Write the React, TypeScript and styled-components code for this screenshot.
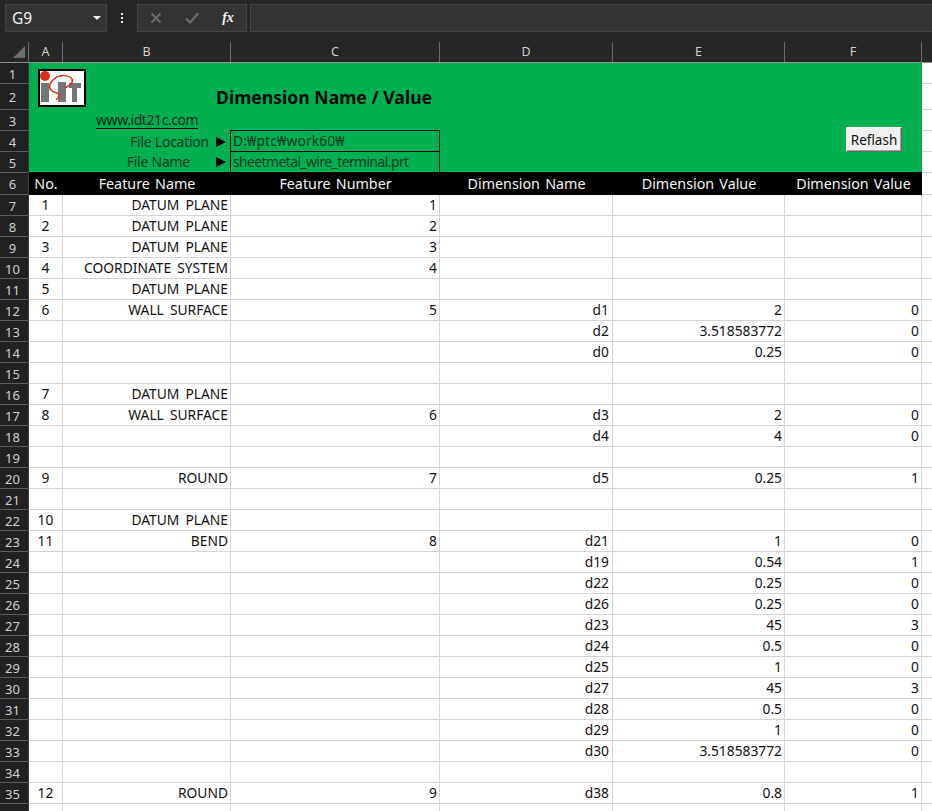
import React from "react";
import styled, { createGlobalStyle } from "styled-components";

const FONT = `"Noto Sans", "Open Sans", "Liberation Sans", sans-serif`;

const Global = createGlobalStyle`
  html, body { margin: 0; padding: 0; background: #262626; overflow: hidden; }
  * { box-sizing: border-box; }
`;

const COLS = "34px 168px 209px 173px 172px 137px";

const Page = styled.div`
  width: 932px;
  height: 811px;
  overflow: hidden;
  background: #262626;
  font-family: ${FONT};
`;

const FormulaBar = styled.div`
  display: flex;
  align-items: flex-start;
  height: 42px;
  padding: 4px 0 0 5px;
`;

const NameBox = styled.div`
  display: flex;
  align-items: center;
  justify-content: space-between;
  width: 102px;
  height: 28px;
  padding: 0 5px 0 6px;
  background: #333333;
  border: 1px solid #434343;
  color: #f2f2f2;
  font-size: 15.5px;
`;

const Caret = styled.span`
  width: 0;
  height: 0;
  border-left: 4px solid transparent;
  border-right: 4px solid transparent;
  border-top: 4px solid #f2f2f2;
`;

const Dots = styled.div`
  display: flex;
  flex-direction: column;
  gap: 2px;
  width: 30px;
  height: 28px;
  align-items: center;
  justify-content: center;
`;

const Dot = styled.span`
  width: 2px;
  height: 2px;
  background: #e6e6e6;
`;

const ActionBox = styled.div`
  display: flex;
  align-items: center;
  width: 110px;
  height: 28px;
  background: #333333;
  border: 1px solid #434343;
`;

const ActionSlot = styled.span`
  display: flex;
  align-items: center;
  justify-content: center;
  width: 36px;
  height: 26px;
`;

const FxText = styled.span`
  font-family: "Liberation Serif", serif;
  font-style: italic;
  font-weight: 700;
  font-size: 14px;
  color: #f2f2f2;
`;

const FormulaInput = styled.div`
  flex: 1;
  height: 28px;
  margin-left: 3px;
  background: #333333;
  border: 1px solid #434343;
  border-right: 0;
`;

const ColumnHeader = styled.div`
  display: grid;
  grid-template-columns: 29px ${COLS} 1fr;
  height: 21px;
  border-bottom: 1px solid #8e8e8e;
`;

const Corner = styled.div`
  display: flex;
  align-items: flex-end;
  justify-content: flex-end;
  padding: 0 3px 4px 0;
  border-right: 1px solid #6a6a6a;
`;

const ColumnLabel = styled.div`
  display: flex;
  align-items: center;
  justify-content: center;
  border-right: 1px solid #6a6a6a;
  color: #d0d0d0;
  font-size: 12.5px;
  padding-bottom: 1px;
`;

const Sheet = styled.div`
  display: flex;
`;

const RowHeaders = styled.div`
  display: flex;
  flex-direction: column;
  width: 29px;
  flex: none;
`;

const RowHead = styled.div<{ $h: number }>`
  display: flex;
  align-items: center;
  justify-content: center;
  flex: none;
  height: ${(p) => p.$h}px;
  background: #212121;
  border-bottom: 1px solid #5c5c5c;
  border-right: 1px solid #3a3a3a;
  color: #cfcfcf;
  font-size: 13px;
  line-height: 18px;
  padding: 1px 3px 0 0;
`;

const Cells = styled.div`
  flex: 1;
  background: #ffffff;
  min-width: 0;
`;

const TopBlock = styled.div`
  display: grid;
  grid-template-columns: 893px 1fr;
`;

const Banner = styled.div`
  display: grid;
  grid-template-columns: ${COLS};
  grid-template-rows: 21px 26px 21px 21px 20px;
  height: 109px;
  background: #00af50;
  color: #0a0a0a;
`;

const LogoFrame = styled.div`
  grid-column: 1 / 3;
  grid-row: 1 / 3;
  margin: 6px 0 0 9px;
  width: 48px;
  height: 38px;
`;

const Title = styled.div`
  grid-column: 2 / 5;
  grid-row: 2;
  padding-left: 153px;
  font-size: 17.6px;
  font-weight: 700;
  line-height: 26px;
  white-space: nowrap;
`;

const SiteLink = styled.div`
  grid-column: 2;
  grid-row: 3;
  padding-left: 33px;
  font-size: 14px;
  letter-spacing: -0.43px;
  line-height: 20px;
`;

const Underlined = styled.span`
  display: inline-block;
  line-height: 17px;
  border-bottom: 1px solid #0a0a0a;
  color: #0d2c1c;
`;

const FileLabel = styled.div<{ $row: number }>`
  grid-column: 2;
  grid-row: ${(p) => p.$row};
  display: flex;
  align-items: center;
  justify-content: flex-end;
  font-size: 14px;
  letter-spacing: -0.25px;
  line-height: 20px;
  color: #0d3a22;
  padding-right: 5px;
`;

const LabelText = styled.span<{ $gap: number }>`
  margin-right: ${(p) => p.$gap}px;
`;

const Arrow = styled.span`
  width: 0;
  height: 0;
  border-top: 5px solid transparent;
  border-bottom: 5px solid transparent;
  border-left: 10px solid #000000;
`;

const PathGroup = styled.div`
  grid-column: 3;
  grid-row: 4 / 6;
  display: flex;
  flex-direction: column;
  margin: -1px 0 0 -1px;
  height: 42px;
  border-left: 1px solid #000;
  border-right: 1px solid #000;
`;

const PathCell = styled.div<{ $tracking: number }>`
  height: 21px;
  border-top: 1px solid #000;
  padding-left: 2px;
  font-size: 13.8px;
  letter-spacing: ${(p) => p.$tracking}px;
  line-height: 20px;
  color: #0d3a22;
  white-space: nowrap;
`;

const RefreshButton = styled.button`
  grid-column: 6;
  grid-row: 3 / 6;
  align-self: start;
  margin: 17px 0 0 61px;
  width: 56px;
  height: 25px;
  padding: 0;
  background: #f0f0f0;
  border: 1px solid;
  border-color: #ffffff #696969 #696969 #ffffff;
  box-shadow: inset -1px -1px 0 #a0a0a0;
  color: #111;
  font-family: ${FONT};
  font-size: 13.5px;
`;

const TitleRow = styled.div`
  display: grid;
  grid-template-columns: ${COLS};
  height: 23px;
  background: #000;
`;

const TitleCell = styled.div`
  display: flex;
  align-items: center;
  justify-content: center;
  color: #f4f4f4;
  font-size: 14.3px;
  word-spacing: 1.5px;
  white-space: nowrap;
`;

const Trail = styled.div`
  display: flex;
  flex-direction: column;
`;

const TrailCell = styled.div<{ $h: number }>`
  height: ${(p) => p.$h}px;
  border-bottom: 1px solid #d4d4d4;
`;

const DataRow = styled.div`
  display: grid;
  grid-template-columns: ${COLS} 1fr;
  height: 21px;
  border-bottom: 1px solid #d4d4d4;
`;

const Cell = styled.div<{ $center?: boolean; $pad?: number }>`
  display: flex;
  align-items: center;
  justify-content: ${(p) => (p.$center ? "center" : "flex-end")};
  padding-right: ${(p) => (p.$center ? 0 : p.$pad ?? 2)}px;
  border-right: 1px solid #d4d4d4;
  color: #111;
  font-size: 13.8px;
  line-height: 18px;
  word-spacing: 2.5px;
  white-space: nowrap;
`;

const EndCell = styled.div``;

type Row = [string?, string?, string?, string?, string?, string?];

const rows: Row[] = [
  ["1", "DATUM PLANE", "1"],
  ["2", "DATUM PLANE", "2"],
  ["3", "DATUM PLANE", "3"],
  ["4", "COORDINATE SYSTEM", "4"],
  ["5", "DATUM PLANE"],
  ["6", "WALL SURFACE", "5", "d1", "2", "0"],
  ["", "", "", "d2", "3.518583772", "0"],
  ["", "", "", "d0", "0.25", "0"],
  [],
  ["7", "DATUM PLANE"],
  ["8", "WALL SURFACE", "6", "d3", "2", "0"],
  ["", "", "", "d4", "4", "0"],
  [],
  ["9", "ROUND", "7", "d5", "0.25", "1"],
  [],
  ["10", "DATUM PLANE"],
  ["11", "BEND", "8", "d21", "1", "0"],
  ["", "", "", "d19", "0.54", "1"],
  ["", "", "", "d22", "0.25", "0"],
  ["", "", "", "d26", "0.25", "0"],
  ["", "", "", "d23", "45", "3"],
  ["", "", "", "d24", "0.5", "0"],
  ["", "", "", "d25", "1", "0"],
  ["", "", "", "d27", "45", "3"],
  ["", "", "", "d28", "0.5", "0"],
  ["", "", "", "d29", "1", "0"],
  ["", "", "", "d30", "3.518583772", "0"],
  [],
  ["12", "ROUND", "9", "d38", "0.8", "1"],
  [],
];

const headHeights = [21, 26, 21, 21, 21, 22, ...rows.map(() => 21)];

const Logo = () => (
  <svg width="48" height="38" viewBox="0 0 48 38">
    <rect x="1" y="1" width="46" height="36" fill="#fff" stroke="#000" strokeWidth="2" />
    <rect x="3" y="14" width="8" height="19" fill="#757575" />
    <rect x="20" y="13" width="8" height="20" fill="#757575" />
    <rect x="31" y="14" width="12" height="5" fill="#757575" />
    <rect x="34" y="19" width="5" height="14" fill="#757575" />
    <path
      d="M27 19C32 16 36 13 34 10C31 6 22 5 16 10C11 14 10 19 14 22C17 24 22 24 21 27C20 29 19 30 18 31"
      fill="none"
      stroke="#d9301e"
      strokeWidth="1.5"
    />
    <circle cx="7" cy="7" r="5" fill="#d9301e" />
  </svg>
);

const CornerMark = () => (
  <svg width="12" height="12" viewBox="0 0 12 12">
    <path d="M12 0V12H0Z" fill="#6e6e6e" />
  </svg>
);

const CloseMark = () => (
  <svg width="12" height="12" viewBox="0 0 12 12">
    <path d="M1.5 1.5L10.5 10.5M10.5 1.5L1.5 10.5" stroke="#6b6b6b" strokeWidth="2" fill="none" />
  </svg>
);

const CheckMark = () => (
  <svg width="14" height="12" viewBox="0 0 14 12">
    <path d="M1 6.5L5 10.5L13 1.5" stroke="#6b6b6b" strokeWidth="2.4" fill="none" />
  </svg>
);

export default function App() {
  return (
    <Page>
      <Global />
      <FormulaBar>
        <NameBox>
          G9
          <Caret />
        </NameBox>
        <Dots>
          <Dot />
          <Dot />
          <Dot />
        </Dots>
        <ActionBox>
          <ActionSlot><CloseMark /></ActionSlot>
          <ActionSlot><CheckMark /></ActionSlot>
          <ActionSlot><FxText>fx</FxText></ActionSlot>
        </ActionBox>
        <FormulaInput />
      </FormulaBar>
      <ColumnHeader>
        <Corner><CornerMark /></Corner>
        {["A", "B", "C", "D", "E", "F"].map((c) => (
          <ColumnLabel key={c}>{c}</ColumnLabel>
        ))}
      </ColumnHeader>
      <Sheet>
        <RowHeaders>
          {headHeights.map((h, i) => (
            <RowHead key={i} $h={h}>{i + 1}</RowHead>
          ))}
        </RowHeaders>
        <Cells>
          <TopBlock>
            <div>
              <Banner>
                <LogoFrame><Logo /></LogoFrame>
                <Title>Dimension Name / Value</Title>
                <SiteLink><Underlined>www.idt21c.com</Underlined></SiteLink>
                <FileLabel $row={4}>
                  <LabelText $gap={7}>File Location</LabelText>
                  <Arrow />
                </FileLabel>
                <FileLabel $row={5}>
                  <LabelText $gap={26}>File Name</LabelText>
                  <Arrow />
                </FileLabel>
                <PathGroup>
                  <PathCell $tracking={0.15}>D:₩ptc₩work60₩</PathCell>
                  <PathCell $tracking={-0.52}>sheetmetal_wire_terminal.prt</PathCell>
                </PathGroup>
                <RefreshButton>Reflash</RefreshButton>
              </Banner>
              <TitleRow>
                {["No.", "Feature Name", "Feature Number", "Dimension Name", "Dimension Value", "Dimension Value"].map((t, i) => (
                  <TitleCell key={i}>{t}</TitleCell>
                ))}
              </TitleRow>
            </div>
            <Trail>
              {[21, 26, 21, 21, 21, 22].map((h, i) => (
                <TrailCell key={i} $h={h} />
              ))}
            </Trail>
          </TopBlock>
          <div>
            {rows.map((r, i) => (
              <DataRow key={i}>
                <Cell $center>{r[0]}</Cell>
                <Cell>{r[1]}</Cell>
                <Cell>{r[2]}</Cell>
                <Cell $pad={3}>{r[3]}</Cell>
                <Cell>{r[4]}</Cell>
                <Cell>{r[5]}</Cell>
                <EndCell />
              </DataRow>
            ))}
          </div>
        </Cells>
      </Sheet>
    </Page>
  );
}
